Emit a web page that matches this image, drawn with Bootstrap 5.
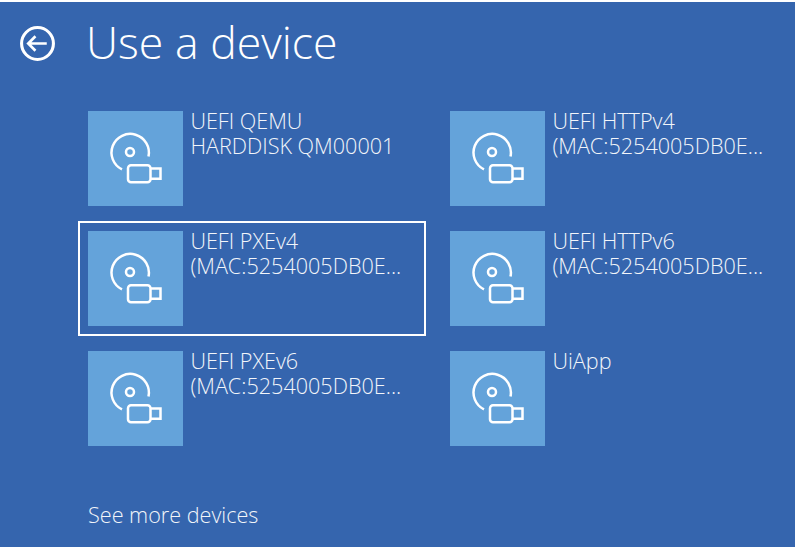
<!DOCTYPE html>
<html lang="en"><head><meta charset="utf-8">
<title>Use a device</title>
<link href="https://cdn.jsdelivr.net/npm/bootstrap@5.3.0/dist/css/bootstrap.min.css" rel="stylesheet">
<style>
html,body{height:100%;margin:0;overflow:hidden}
body{background:#fff;font-family:"Open Sans","Liberation Sans",sans-serif}
.scr{margin-top:2px;height:545px;background:#3565ae;color:#fff;padding-left:19px}
.ttl{height:82px}
.ttl svg{width:37px;height:37px}
.ttl h1{font-size:44.6px;font-weight:300;margin:-2px 0 0 30px;line-height:1;font-family:"Open Sans",sans-serif}
.dgrid{display:grid;grid-template-columns:362px 362px;grid-auto-rows:120.25px;margin-left:59.4px;margin-top:16.5px}
.ditem{display:flex;height:115px;padding:8px;border:2px solid transparent;width:347.6px;color:#f2f5fa;font-size:21.6px;font-weight:300;line-height:25px}
.ditem.sel{border-color:#fff}
.tile{width:95px;height:95px;flex:none;background:#64a3da;margin-right:7px}
.tile svg{display:block;width:95px;height:95px}
.lbl{margin-top:-3px;white-space:nowrap}
.more{margin:41px 0 0 69px;font-size:21.6px;font-weight:300;line-height:25px;color:#f2f5fa}
</style></head><body>
<svg width="0" height="0" class="position-absolute"><defs><g id="ic" fill="none" stroke="#fff" stroke-width="2.5">
<path d="M34 58.4A18.7 18.7 0 1 1 60.5 45.5"/>
<circle cx="42" cy="41" r="4"/>
<rect x="40" y="54.2" width="22.5" height="17" rx="3"/>
<path d="M62.5 57.5h10v10.2h-10"/>
</g></defs></svg>
<div class="scr">
<div class="ttl d-flex align-items-center">
<svg viewBox="0 0 36 36" fill="none" stroke="#fff" stroke-width="3"><circle cx="18" cy="18" r="15.5"/><path d="M27 18H9.5M16 11l-7 7 7 7" stroke-width="2.6"/></svg>
<h1>Use a device</h1>
</div>
<div class="dgrid">
<div class="ditem"><div class="tile"><svg viewBox="0 0 95 95"><use href="#ic"/></svg></div><div class="lbl">UEFI QEMU<br>HARDDISK QM00001</div></div>
<div class="ditem"><div class="tile"><svg viewBox="0 0 95 95"><use href="#ic"/></svg></div><div class="lbl">UEFI HTTPv4<br>(MAC:5254005DB0E...</div></div>
<div class="ditem sel"><div class="tile"><svg viewBox="0 0 95 95"><use href="#ic"/></svg></div><div class="lbl">UEFI PXEv4<br>(MAC:5254005DB0E...</div></div>
<div class="ditem"><div class="tile"><svg viewBox="0 0 95 95"><use href="#ic"/></svg></div><div class="lbl">UEFI HTTPv6<br>(MAC:5254005DB0E...</div></div>
<div class="ditem"><div class="tile"><svg viewBox="0 0 95 95"><use href="#ic"/></svg></div><div class="lbl">UEFI PXEv6<br>(MAC:5254005DB0E...</div></div>
<div class="ditem"><div class="tile"><svg viewBox="0 0 95 95"><use href="#ic"/></svg></div><div class="lbl">UiApp</div></div>
</div>
<div class="more">See more devices</div>
</div>
</body></html>
